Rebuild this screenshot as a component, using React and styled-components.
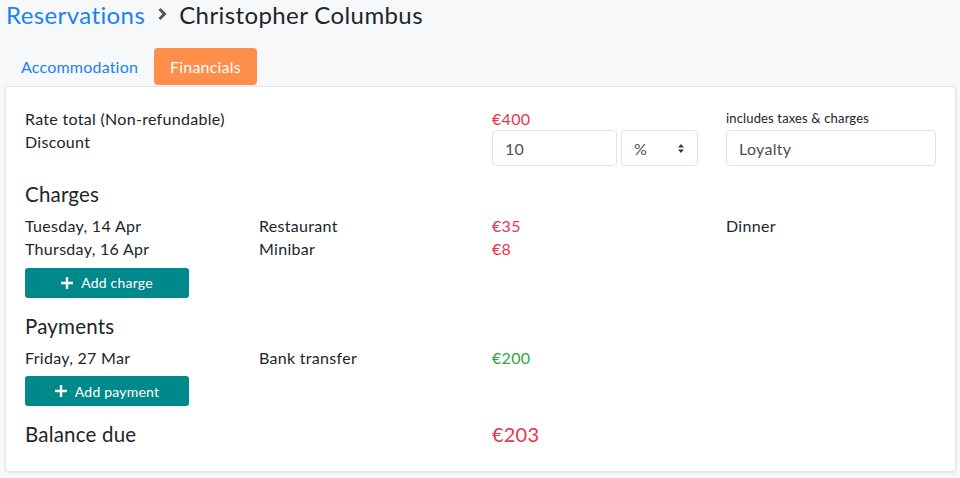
import React from "react";
import styled, { createGlobalStyle } from "styled-components";

const Global = createGlobalStyle`
  html, body { margin: 0; padding: 0; }
  body {
    background: #f7f8fa;
    font-family: "Lato", "Noto Sans", sans-serif;
    color: #212529;
    width: 960px;
    height: 478px;
    overflow: hidden;
  }
  * { box-sizing: border-box; }
`;

const Page = styled.div`
  padding: 0 4px 0 5px;
`;

const Breadcrumb = styled.h1`
  margin: 0;
  height: 28px;
  display: flex;
  align-items: center;
  gap: 12px;
  font-size: 24px;
  font-weight: 400;
  padding-left: 1px;
  letter-spacing: 0.4px;
`;

const Crumb = styled.a`
  color: #1a82f5;
  text-decoration: none;
`;

const Current = styled.span`
  color: #212529;
`;

const Tabs = styled.nav`
  display: flex;
  align-items: flex-end;
  margin-top: 20px;
  height: 38px;
  padding-bottom: 1px;
`;

const Tab = styled.a`
  display: flex;
  align-items: center;
  height: 37px;
  padding: 0 16px;
  font-size: 16px;
  border-radius: 4px;
  text-decoration: none;
  color: ${(p) => (p.$active ? "#fff" : "#1a82f5")};
  background: ${(p) => (p.$active ? "#fd8f4b" : "transparent")};
  letter-spacing: 0.2px;
`;

const Card = styled.section`
  background: #fff;
  border: 1px solid #e4e6ea;
  border-radius: 3px;
  box-shadow: 0 1px 3px rgba(0, 0, 0, 0.08);
  height: 386px;
  padding: 20px 19px 0 19px;
`;

const Grid = styled.div`
  display: grid;
  grid-template-columns: 234px 233px 234px 210px;
  font-size: 16px;
  line-height: 23px;
  letter-spacing: 0.3px;
`;

const Cell = styled.div`
  grid-column: ${(p) => p.$col || "auto"};
  color: ${(p) => p.$color || "#212529"};
`;

const Small = styled.div`
  font-size: 13px;
  line-height: 23px;
  color: #212529;
  letter-spacing: 0.15px;
`;

const InputRow = styled.div`
  display: flex;
  gap: 4px;
  width: ${(p) => p.$w || "auto"};
`;

const Input = styled.div`
  height: 36px;
  border: 1px solid #dfe2e6;
  border-radius: 4px;
  display: flex;
  align-items: center;
  padding: 0 12px;
  font-size: 16px;
  color: #495057;
  flex: ${(p) => p.$flex || "1"};
  justify-content: space-between;
`;

const Heading = styled.h2`
  grid-column: 1 / -1;
  margin: 16px 0 8px;
  font-size: 20.5px;
  font-weight: 400;
  line-height: 24px;
  color: #212529;
  letter-spacing: 0.2px;
`;

const Button = styled.button`
  grid-column: 1;
  margin-top: 7.5px;
  width: 164px;
  height: 30px;
  border: none;
  border-radius: 3px;
  background: #00898b;
  color: #fff;
  font-family: inherit;
  font-size: 14px;
  letter-spacing: 0.2px;
  display: flex;
  align-items: center;
  justify-content: center;
  gap: 8px;
  padding: 0;
`;

const Balance = styled.div`
  grid-column: ${(p) => p.$col};
  margin-top: 16px;
  font-size: ${(p) => (p.$big ? "20px" : "20.5px")};
  line-height: 24px;
  letter-spacing: 0.2px;
  color: ${(p) => p.$color || "#212529"};
`;

const RED = "#e8354d";
const GREEN = "#2ca745";

const Chevron = () => (
  <svg width="10" height="14" viewBox="0 0 10 14">
    <path d="M2.5 2l5 5-5 5" fill="none" stroke="#555" strokeWidth="3" />
  </svg>
);

const Plus = () => (
  <svg width="12" height="12" viewBox="0 0 12 12">
    <path d="M6 0v12M0 6h12" stroke="#fff" strokeWidth="2.4" />
  </svg>
);

const Updown = () => (
  <svg width="8" height="11" viewBox="0 0 8 11">
    <path d="M1 4.5L4 1l3 3.5zM1 6.5L4 10l3-3.5z" fill="#343a40" />
  </svg>
);

export default function App() {
  return (
    <>
      <Global />
      <Page>
        <Breadcrumb>
          <Crumb href="#">Reservations</Crumb>
          <Chevron />
          <Current>Christopher Columbus</Current>
        </Breadcrumb>
        <Tabs>
          <Tab href="#">Accommodation</Tab>
          <Tab href="#" $active>
            Financials
          </Tab>
        </Tabs>
        <Card>
          <Grid>
            <Cell $col="1">
              Rate total (Non-refundable)
              <br />
              Discount
            </Cell>
            <Cell $col="3">
              <Cell $color={RED}>€400</Cell>
              <InputRow $w="206px">
                <Input $flex="0 0 125px">10</Input>
                <Input $flex="1">
                  % <Updown />
                </Input>
              </InputRow>
            </Cell>
            <Cell $col="4">
              <Small>includes taxes &amp; charges</Small>
              <InputRow>
                <Input>Loyalty</Input>
              </InputRow>
            </Cell>

            <Heading>Charges</Heading>
            <Cell $col="1">Tuesday, 14 Apr</Cell>
            <Cell>Restaurant</Cell>
            <Cell $color={RED}>€35</Cell>
            <Cell>Dinner</Cell>
            <Cell $col="1">Thursday, 16 Apr</Cell>
            <Cell>Minibar</Cell>
            <Cell $color={RED}>€8</Cell>
            <Cell />
            <Button>
              <Plus /> Add charge
            </Button>

            <Heading>Payments</Heading>
            <Cell $col="1">Friday, 27 Mar</Cell>
            <Cell>Bank transfer</Cell>
            <Cell $color={GREEN}>€200</Cell>
            <Cell />
            <Button>
              <Plus /> Add payment
            </Button>

            <Balance $col="1">Balance due</Balance>
            <Balance $col="3" $big $color={RED}>
              €203
            </Balance>
          </Grid>
        </Card>
      </Page>
    </>
  );
}
